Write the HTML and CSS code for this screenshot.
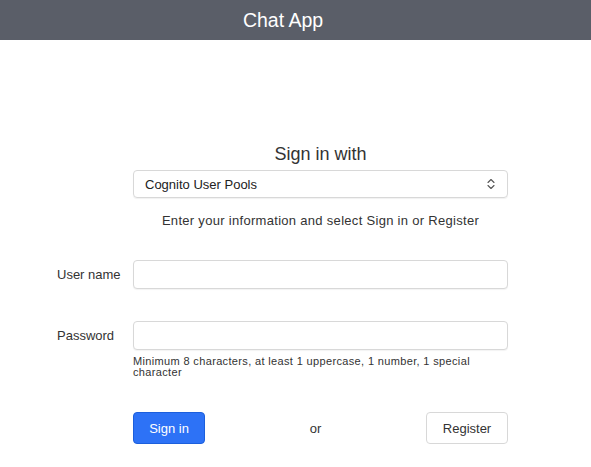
FILE: index.html
```html
<!DOCTYPE html>
<html>
<head>
<meta charset="utf-8">
<link rel="stylesheet" href="styles.css">
</head>
<body>
<header class="topbar"><span class="title">Chat App</span></header>
<main class="form">
  <div class="heading">Sign in with</div>
  <div class="select">
    <span>Cognito User Pools</span>
    <svg class="chev" width="8" height="12" viewBox="0 0 8 12"><path d="M1 4.5 L4 1.5 L7 4.5 M1 7.5 L4 10.5 L7 7.5" fill="none" stroke="#555" stroke-width="1.1" stroke-linecap="round" stroke-linejoin="round"/></svg>
  </div>
  <div class="info">Enter your information and select Sign in or Register</div>

  <label class="label row-user">User name</label>
  <div class="input row-user"></div>

  <label class="label row-pass">Password</label>
  <div class="input row-pass"></div>
  <div class="hint">Minimum 8 characters, at least 1 uppercase, 1 number, 1 special character</div>

  <div class="actions">
    <button class="btn primary">Sign in</button>
    <span class="or">or</span>
    <button class="btn">Register</button>
  </div>
</main>
</body>
</html>
```

FILE: styles.css
```css
html, body {
  margin: 0;
  padding: 0;
  background: #fff;
  font-family: "Liberation Sans", Arial, sans-serif;
  color: #333;
}
.topbar {
  height: 40px;
  background: #5a5e68;
  display: flex;
  align-items: center;
  justify-content: center;
  padding-right: 25px;
}
.title {
  color: #fff;
  font-size: 19.5px;
  margin-top: 1px;
}
.form {
  width: 451px;
  margin-left: 57px;
  margin-top: 104px;
  display: grid;
  grid-template-columns: 76px 375px;
  align-items: center;
}
.heading, .select, .info, .hint, .actions, .input {
  grid-column: 2;
}
.heading {
  text-align: center;
  font-size: 18px;
  line-height: 20px;
  color: #333;
}
.select {
  margin-top: 6px;
  height: 28px;
  box-sizing: border-box;
  border: 1px solid #d8d8d8;
  border-radius: 4px;
  box-shadow: 0 1px 1px rgba(0,0,0,0.06);
  display: flex;
  align-items: center;
  justify-content: space-between;
  padding: 0 12px 0 11px;
  font-size: 13px;
  color: #222;
}
.chev { display: block; }
.info {
  margin-top: 16px;
  text-align: center;
  font-size: 13px;
  letter-spacing: 0.3px;
  line-height: 14px;
  color: #333;
}
.label {
  grid-column: 1;
  font-size: 13px;
  color: #333;
}
.row-user { margin-top: 32px; }
.row-pass { margin-top: 32px; }
.input {
  height: 29px;
  box-sizing: border-box;
  border: 1px solid #d8d8d8;
  border-radius: 4px;
  box-shadow: 0 1px 1px rgba(0,0,0,0.05);
  background: #fff;
}
.hint {
  margin-top: 6px;
  font-size: 11px;
  letter-spacing: 0.35px;
  line-height: 11px;
  color: #333;
  padding-right: 20px;
}
.actions {
  margin-top: 34px;
  display: flex;
  justify-content: space-between;
  align-items: center;
}
.btn {
  font-family: "Liberation Sans", Arial, sans-serif;
  font-size: 13px;
  height: 32px;
  box-sizing: border-box;
  border-radius: 4px;
  border: 1px solid #d8d8d8;
  background: #fff;
  color: #333;
  width: 82px;
  padding: 0;
}
.btn.primary {
  width: 72px;
  background: #2d72f6;
  border-color: #1c5fdc;
  color: #fff;
}
.or {
  font-size: 13px;
  color: #333;
}
```
